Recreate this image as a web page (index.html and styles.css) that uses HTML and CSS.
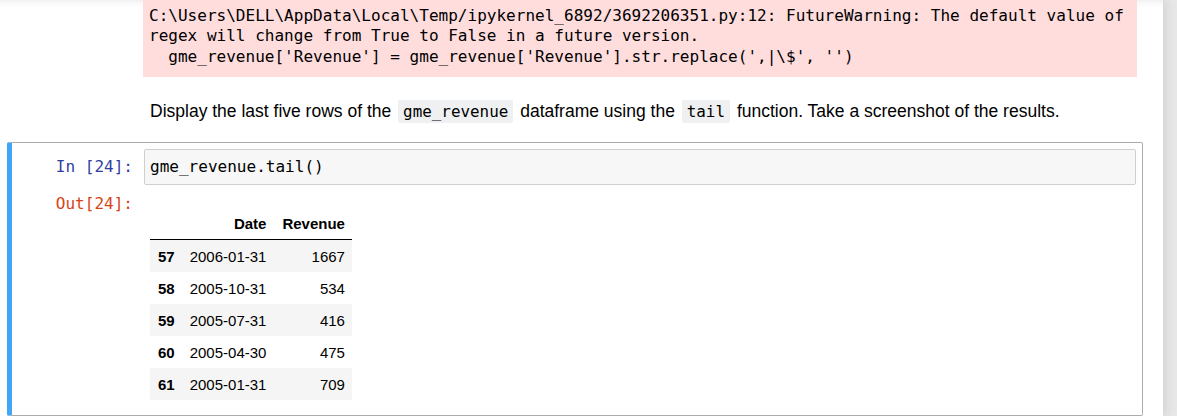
FILE: index.html
```html
<!DOCTYPE html>
<html>
<head>
<meta charset="utf-8">
<link rel="stylesheet" href="styles.css">
</head>
<body>
<div class="site">
  <div class="notebook">
    <div class="prev-output"><pre class="stderr">C:\Users\DELL\AppData\Local\Temp/ipykernel_6892/3692206351.py:12: FutureWarning: The default value of
regex will change from True to False in a future version.
  gme_revenue['Revenue'] = gme_revenue['Revenue'].str.replace(',|\$', '')</pre></div>

    <div class="md">
      <p>Display the last five rows of the <code>gme_revenue</code> dataframe using the <code>tail</code> function. Take a screenshot of the results.</p>
    </div>

    <div class="cell">
      <div class="row">
        <div class="prompt in-prompt">In&nbsp;[24]:</div>
        <div class="input-area">gme_revenue.tail()</div>
      </div>
      <div class="row out-row">
        <div class="prompt out-prompt">Out[24]:</div>
        <div class="output-sub">
          <table class="df">
            <thead>
              <tr><th></th><th class="r">Date</th><th class="r last">Revenue</th></tr>
            </thead>
            <tbody>
              <tr><th>57</th><td>2006-01-31</td><td class="r last">1667</td></tr>
              <tr><th>58</th><td>2005-10-31</td><td class="r last">534</td></tr>
              <tr><th>59</th><td>2005-07-31</td><td class="r last">416</td></tr>
              <tr><th>60</th><td>2005-04-30</td><td class="r last">475</td></tr>
              <tr><th>61</th><td>2005-01-31</td><td class="r last">709</td></tr>
            </tbody>
          </table>
        </div>
      </div>
    </div>
  </div>
  <div class="side"></div>
</div>
</body>
</html>
```

FILE: styles.css
```css
html, body {
  margin: 0;
  padding: 0;
  height: 416px;
  overflow: hidden;
  background: #eeeeee;
}

.site {
  display: flex;
  height: 416px;
}

.notebook {
  width: 1163px;
  flex: none;
  background: linear-gradient(to bottom, #f1f1f1 0, #fbfbfb 4px, #ffffff 8px);
  box-shadow: 0 0 12px 1px rgba(87, 87, 87, 0.2);
  position: relative;
  z-index: 1;
}

.side {
  flex: 1;
  background: #e8e8e8;
}

.prev-output {
  margin-left: 143px;
  width: 994px;
  height: 77px;
  box-sizing: border-box;
  background: #ffdddd;
  padding: 6px 6px 0 6px;
}

.stderr {
  margin: 0;
  font-family: "DejaVu Sans Mono", "Liberation Mono", monospace;
  font-size: 16.05px;
  line-height: 20.3px;
  color: #000;
  white-space: pre;
}

.md {
  padding-left: 150px;
  margin-top: 22px;
  font-family: "Liberation Sans", Arial, sans-serif;
  font-size: 17.5px;
  color: #000;
}

.md p {
  margin: 0;
  line-height: 24px;
  height: 24px;
}

.md code {
  font-family: "DejaVu Sans Mono", "Liberation Mono", monospace;
  font-size: 15.9px;
  background: #eff0f1;
  padding: 2px 5px;
  border-radius: 2px;
  margin: 0 2px;
}

.cell {
  margin-top: 19px;
  margin-left: 7px;
  width: 1136px;
  height: 274px;
  box-sizing: border-box;
  border: 1px solid #ababab;
  border-left: 5px solid #42a5f5;
  border-radius: 2px;
  padding: 6px 6px 6px 6px;
}

.row {
  display: flex;
}

.prompt {
  width: 126px;
  flex: none;
  box-sizing: border-box;
  padding-right: 11px;
  text-align: right;
  font-family: "DejaVu Sans Mono", "Liberation Mono", monospace;
  font-size: 16.05px;
  line-height: 36px;
}

.in-prompt {
  color: #303f9f;
}

.out-prompt {
  color: #d84315;
  line-height: 20px;
}

.input-area {
  width: 993px;
  height: 36px;
  box-sizing: border-box;
  border: 1px solid #cfcfcf;
  border-radius: 2px;
  background: #f7f7f7;
  padding-left: 5px;
  font-family: "DejaVu Sans Mono", "Liberation Mono", monospace;
  font-size: 16.05px;
  line-height: 34px;
  color: #000;
}

.out-row {
  margin-top: 9px;
}

.output-sub {
  padding-left: 6px;
  padding-top: 14px;
}

.df {
  border-collapse: collapse;
  border-spacing: 0;
  font-family: "Liberation Sans", Arial, sans-serif;
  font-size: 15px;
  color: #000;
}

.df th, .df td {
  height: 32px;
  padding: 0 8px;
  text-align: left;
  vertical-align: middle;
  white-space: nowrap;
}

.df th {
  font-weight: bold;
}

.df .r {
  text-align: right;
}

.df .last {
  padding-right: 7px;
}

.df thead tr {
  border-bottom: 1px solid #000;
}

.df thead th {
  height: 31px;
}

.df tbody tr:nth-child(odd) {
  background: #f5f5f5;
}

.df tbody td:nth-child(2) {
  padding-left: 7px;
}
```
